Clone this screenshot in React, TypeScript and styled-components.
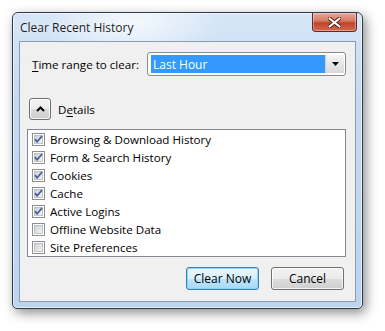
import React, { useState } from 'react';
import styled, { createGlobalStyle } from 'styled-components';

const GlobalStyle = createGlobalStyle`
  html, body {
    margin: 0;
    padding: 0;
    background: #ffffff;
  }
  body {
    font-family: "Segoe UI", "Open Sans", "Liberation Sans", sans-serif;
    font-size: 11.6px;
    color: #000;
  }
`;

const Page = styled.div`
  width: 385px;
  height: 331px;
  padding: 12px 0 0 12px;
  box-sizing: border-box;
  overflow: hidden;
`;

const Frame = styled.div`
  width: 351px;
  height: 297px;
  box-sizing: border-box;
  border: 1px solid #2b3a4d;
  border-radius: 6px 6px 5px 5px;
  background:
    radial-gradient(ellipse 90px 40px at 120px 10px, rgba(255, 255, 255, 0.75), rgba(255, 255, 255, 0) 100%),
    linear-gradient(180deg, #d6e6f7 0%, #c4daf1 30%, #bcd4ee 100%);
  box-shadow: 3px 4px 12px rgba(0, 0, 0, 0.45), inset 0 0 0 1px rgba(255, 255, 255, 0.6);
  padding: 0 6px 6px 6px;
  display: flex;
  flex-direction: column;
`;

const TitleBar = styled.div`
  height: 28px;
  display: flex;
  align-items: flex-start;
  justify-content: space-between;
`;

const Title = styled.div`
  padding: 6px 0 0 1px;
  font-size: 12px;
  color: #1e1e1e;
  text-shadow: 0 0 6px rgba(255, 255, 255, 0.9);
`;

const CloseButton = styled.button`
  width: 45px;
  height: 19px;
  margin-right: -1px;
  border: 1px solid #5e2a24;
  border-top: none;
  border-radius: 0 0 4px 4px;
  background: linear-gradient(180deg, #e7a99b 0%, #d5775f 45%, #c0442b 55%, #d46a4e 100%);
  box-shadow: inset 0 0 0 1px rgba(255, 255, 255, 0.35);
  display: flex;
  align-items: center;
  justify-content: center;
  padding: 0;
`;

const Client = styled.div`
  flex: 1;
  border: 1px solid #8a9cb2;
  background: #f0f0f0;
  display: flex;
  flex-direction: column;
  padding: 10px 9px 0 7px;
`;

const RangeRow = styled.div`
  display: flex;
  align-items: center;
  justify-content: space-between;
  padding-left: 5px;
`;

const Label = styled.span`
  u {
    text-decoration: underline;
    text-underline-offset: 2px;
  }
`;

const Select = styled.div`
  width: 199px;
  height: 24px;
  box-sizing: border-box;
  border: 1px solid #8a8a8a;
  border-radius: 3px;
  background: #fff;
  display: flex;
  align-items: stretch;
  padding: 2px 1px 2px 3px;
`;

const Selected = styled.div`
  flex: 1;
  background: #3399ff;
  color: #fff;
  padding-left: 2px;
  display: flex;
  align-items: center;
  font-size: 12px;
`;

const SelectArrow = styled.div`
  width: 18px;
  background: linear-gradient(180deg, #f4f4f4 0%, #e6e6e6 50%, #d8d8d8 100%);
  border-left: 1px solid #cfcfcf;
  display: flex;
  align-items: center;
  justify-content: center;
`;

const DetailsRow = styled.div`
  display: flex;
  align-items: center;
  gap: 7px;
  margin-top: 22px;
  padding-left: 2px;
`;

const ToggleButton = styled.button`
  width: 22px;
  height: 22px;
  box-sizing: border-box;
  border: 1px solid #707070;
  border-radius: 3px;
  background: linear-gradient(180deg, #f4f4f4 0%, #ebebeb 50%, #dbdbdb 51%, #cfcfcf 100%);
  box-shadow: inset 0 0 0 1px rgba(255, 255, 255, 0.8);
  display: flex;
  align-items: center;
  justify-content: center;
  padding: 0;
`;

const ItemList = styled.div`
  margin-top: 9px;
  width: 319px;
  height: 128px;
  box-sizing: border-box;
  border: 1px solid #828790;
  background: #fff;
  padding: 1px 0 0 4px;
  display: flex;
  flex-direction: column;
`;

const Item = styled.label`
  height: 18px;
  display: flex;
  align-items: center;
  gap: 5px;
  cursor: default;
`;

const BoxWrap = styled.span`
  width: 13px;
  height: 13px;
  display: flex;
`;

const Footer = styled.div`
  display: flex;
  justify-content: flex-end;
  gap: 12px;
  margin-top: 10px;
  padding-right: 2px;
`;

const PushButton = styled.button<{ $primary?: boolean }>`
  width: 73px;
  height: 23px;
  box-sizing: border-box;
  border: 1px solid ${(p) => (p.$primary ? '#3c7fb1' : '#707070')};
  border-radius: 3px;
  background: ${(p) =>
    p.$primary
      ? 'linear-gradient(180deg, #eaf6fd 0%, #d9f0fc 50%, #bee6fd 51%, #a7d9f5 100%)'
      : 'linear-gradient(180deg, #f2f2f2 0%, #ebebeb 50%, #dddddd 51%, #cfcfcf 100%)'};
  box-shadow: ${(p) =>
    p.$primary ? 'inset 0 0 0 1px #8fd3f7' : 'inset 0 0 0 1px rgba(255, 255, 255, 0.8)'};
  font-family: inherit;
  font-size: 12px;
  color: #000;
  padding: 0;
`;

const Checkbox = ({ checked }: { checked: boolean }) => (
  <BoxWrap>
    <svg width="13" height="13" viewBox="0 0 13 13">
      <defs>
        <linearGradient id="cbg" x1="0" y1="0" x2="1" y2="1">
          <stop offset="0" stopColor="#cbcfd5" />
          <stop offset="1" stopColor="#f6f6f6" />
        </linearGradient>
      </defs>
      <rect x="0.5" y="0.5" width="12" height="12" fill="#fff" stroke="#8e8f8f" />
      <rect x="2.5" y="2.5" width="8" height="8" fill="url(#cbg)" stroke="#b3b6bb" strokeWidth="0.8" />
      {checked && (
        <path d="M3 6.2 L5.2 8.8 L10 3" fill="none" stroke="#4a5f97" strokeWidth="1.8" strokeLinejoin="round" />
      )}
    </svg>
  </BoxWrap>
);

const items = [
  { label: 'Browsing & Download History', checked: true },
  { label: 'Form & Search History', checked: true },
  { label: 'Cookies', checked: true },
  { label: 'Cache', checked: true },
  { label: 'Active Logins', checked: true },
  { label: 'Offline Website Data', checked: false },
  { label: 'Site Preferences', checked: false },
];

const App: React.FC = () => {
  const [checks, setChecks] = useState(items.map((i) => i.checked));

  const toggle = (idx: number) => {
    setChecks(checks.map((c, i) => (i === idx ? !c : c)));
  };

  return (
    <Page>
      <GlobalStyle />
      <Frame>
        <TitleBar>
          <Title>Clear Recent History</Title>
          <CloseButton aria-label="Close">
            <svg width="13" height="11" viewBox="0 0 13 11">
              <path
                d="M1.5 1.5 L11.5 9.5 M11.5 1.5 L1.5 9.5"
                stroke="#5a1e14"
                strokeWidth="4"
                strokeLinecap="round"
              />
              <path
                d="M1.5 1.5 L11.5 9.5 M11.5 1.5 L1.5 9.5"
                stroke="#ffffff"
                strokeWidth="2.2"
                strokeLinecap="round"
              />
            </svg>
          </CloseButton>
        </TitleBar>
        <Client>
          <RangeRow>
            <Label>
              <u>T</u>ime range to clear:
            </Label>
            <Select>
              <Selected>Last Hour</Selected>
              <SelectArrow>
                <svg width="7" height="4" viewBox="0 0 7 4">
                  <path d="M0 0 H7 L3.5 4 Z" fill="#000" />
                </svg>
              </SelectArrow>
            </Select>
          </RangeRow>
          <DetailsRow>
            <ToggleButton aria-label="Hide details">
              <svg width="9" height="6" viewBox="0 0 9 6">
                <path d="M1 5 L4.5 1.5 L8 5" fill="none" stroke="#000" strokeWidth="2" />
              </svg>
            </ToggleButton>
            <Label>
              D<u>e</u>tails
            </Label>
          </DetailsRow>
          <ItemList>
            {items.map((item, idx) => (
              <Item key={item.label} onClick={() => toggle(idx)}>
                <Checkbox checked={checks[idx]} />
                <span>{item.label}</span>
              </Item>
            ))}
          </ItemList>
          <Footer>
            <PushButton $primary>Clear Now</PushButton>
            <PushButton>Cancel</PushButton>
          </Footer>
        </Client>
      </Frame>
    </Page>
  );
};

export default App;
